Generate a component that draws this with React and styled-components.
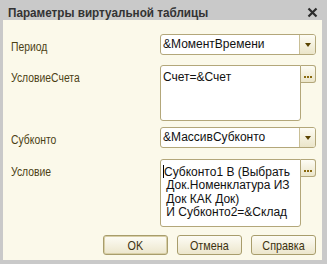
import React from 'react'
import styled, { createGlobalStyle } from 'styled-components'

const Global = createGlobalStyle`
  html, body { margin: 0; padding: 0; background: #c9c9c9; }
  body { font-family: "Liberation Sans", Arial, sans-serif; }
`

const Window = styled.div`
  width: 327px;
  height: 264px;
  box-sizing: border-box;
  background: #c9c9c9;
  padding: 0 5px 5px 3px;
  display: flex;
  flex-direction: column;
`

const TitleBar = styled.div`
  height: 21px;
  box-sizing: border-box;
  padding-top: 5px;
  display: flex;
  align-items: center;
  justify-content: space-between;
  margin-left: -3px;
  margin-right: -5px;
  padding-left: 8px;
  padding-right: 9px;
`

// the 1C dialog font is a condensed sans; squeeze Liberation Sans to its width
const Title = styled.span`
  display: inline-block;
  font-weight: bold;
  font-size: 13px;
  color: #333;
  transform: scaleX(0.9);
  transform-origin: left center;
  white-space: nowrap;
`

const Body = styled.div`
  flex: 1;
  background: #fbf9ea;
  padding: 14px 6px 5px 8px;
  display: flex;
  flex-direction: column;
`

const Row = styled.div`
  display: grid;
  grid-template-columns: 149px 1fr;
  margin-bottom: ${p => p.gap || 0}px;
`

const Label = styled.div`
  padding-top: 5px;
  line-height: 14px;
`

const LabelText = styled.span`
  display: inline-block;
  font-size: 12.5px;
  color: #4b3f14;
  transform: scaleX(0.83);
  transform-origin: left center;
  white-space: nowrap;
`

const Combo = styled.div`
  height: 21px;
  box-sizing: border-box;
  border: 1px solid #b3a77a;
  border-radius: 3px;
  background: #fff;
  display: flex;
  align-items: stretch;
  overflow: hidden;
`

const ComboText = styled.div`
  flex: 1;
  font-size: 12px;
  color: #111;
  padding-left: 2px;
  line-height: 19px;
`

const DropButton = styled.div`
  width: 15px;
  border-left: 1px solid #c9bf96;
  background: linear-gradient(#fdfcf4, #ebe5c9);
  display: flex;
  align-items: center;
  justify-content: center;
`

const Arrow = styled.div`
  width: 0;
  height: 0;
  border-left: 3.5px solid transparent;
  border-right: 3.5px solid transparent;
  border-top: 4px solid #5a4300;
`

const MemoWrap = styled.div`
  display: flex;
  align-items: flex-start;
`

const Memo = styled.div`
  flex: 1;
  height: ${p => p.h}px;
  box-sizing: border-box;
  border: 1px solid #b3a77a;
  border-radius: 3px 0 3px 3px;
  background: #fff;
  font-size: 12px;
  color: #111;
  line-height: 13.3px;
  padding: 5px 2px 0 2px;
  white-space: pre;
`

const Caret = styled.span`
  display: inline-block;
  width: 1px;
  height: 13px;
  background: #000;
  vertical-align: -2px;
`

const DotsButton = styled.div`
  width: 15px;
  height: 18px;
  box-sizing: border-box;
  border: 1px solid #b3a77a;
  border-left: none;
  border-radius: 0 3px 3px 0;
  background: linear-gradient(#fdfcf4, #ebe5c9);
  display: flex;
  align-items: flex-end;
  justify-content: center;
  padding-bottom: 4px;
  gap: 1px;
`

const Dot = styled.span`
  width: 2px;
  height: 2px;
  background: #8a6a10;
`

const Buttons = styled.div`
  display: flex;
  justify-content: flex-end;
  gap: 9px;
  margin-top: 8px;
`

const Button = styled.div`
  width: 65px;
  height: 20px;
  box-sizing: border-box;
  border: 1px solid #a89d6c;
  border-radius: 3px;
  background: linear-gradient(#fdfcf5, #ece6cc);
  box-shadow: ${p => (p.$default ? 'inset 0 0 0 1px #d8cfa6' : 'none')};
  display: flex;
  align-items: center;
  justify-content: center;
`

const ButtonText = styled.span`
  display: inline-block;
  font-size: 13px;
  color: #3d3210;
  transform: scaleX(0.83);
  white-space: nowrap;
`

const CloseIcon = () => (
  <svg width="11" height="11" viewBox="0 0 11 11">
    <path d="M1.5 1.5 L9.5 9.5 M9.5 1.5 L1.5 9.5" stroke="#2b2b2b" strokeWidth="2.2" />
  </svg>
)

const ComboBox = ({ value }) => (
  <Combo>
    <ComboText>{value}</ComboText>
    <DropButton><Arrow /></DropButton>
  </Combo>
)

const MemoField = ({ h, children }) => (
  <MemoWrap>
    <Memo h={h}>{children}</Memo>
    <DotsButton><Dot /><Dot /><Dot /></DotsButton>
  </MemoWrap>
)

const Field = ({ label, gap, children }) => (
  <Row gap={gap}>
    <Label><LabelText>{label}</LabelText></Label>
    {children}
  </Row>
)

export default function App() {
  return (
    <>
      <Global />
      <Window>
        <TitleBar>
          <Title>Параметры виртуальной таблицы</Title>
          <CloseIcon />
        </TitleBar>
        <Body>
          <Field label="Период" gap={10}>
            <ComboBox value="&МоментВремени" />
          </Field>
          <Field label="УсловиеСчета" gap={6}>
            <MemoField h={56}>Счет=&Счет</MemoField>
          </Field>
          <Field label="Субконто" gap={11}>
            <ComboBox value="&МассивСубконто" />
          </Field>
          <Field label="Условие">
            <MemoField h={68}>
              <Caret />{'Субконто1 В (Выбрать\n Док.Номенклатура ИЗ\n Док КАК Док)\n И Субконто2=&Склад'}
            </MemoField>
          </Field>
          <Buttons>
            <Button $default><ButtonText>OK</ButtonText></Button>
            <Button><ButtonText>Отмена</ButtonText></Button>
            <Button><ButtonText>Справка</ButtonText></Button>
          </Buttons>
        </Body>
      </Window>
    </>
  )
}
